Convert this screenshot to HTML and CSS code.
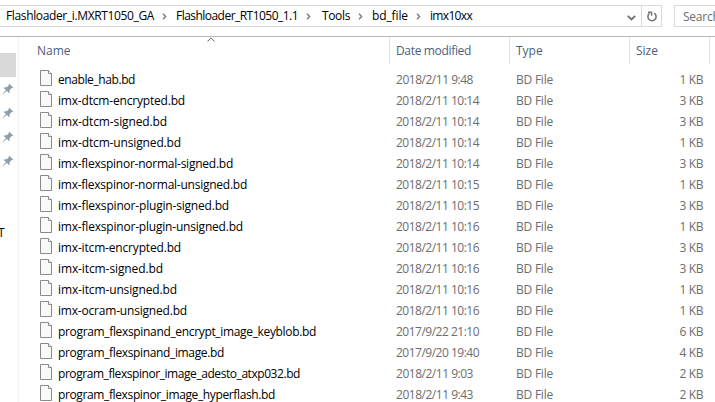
FILE: index.html
```
<!DOCTYPE html>
<html lang="en">
<head>
<meta charset="utf-8">
<title>imx10xx</title>
<link rel="stylesheet" href="styles.css">
</head>
<body>
<svg width="0" height="0" class="defs">
  <symbol id="file" viewBox="0 0 12 16"><path d="M.5.5h8l3 3v12H.5z" fill="#f8f9f9" stroke="#8b8b8b"/><path d="M8.5.5v3h3" fill="#fff" stroke="#8b8b8b"/></symbol>
  <symbol id="pin" viewBox="0 0 12 12"><path d="M7.2.8 11.2 4.6 10.3 5.3 9.6 5 7.6 7.2 7.7 9.3 6.8 10.1 4.6 7.8 1 11.2.7 10.8 3.8 7.1 1.8 5 2.7 4.2 4.8 4.3 6.9 2.3 6.5 1.5Z" fill="#929da5"/></symbol>
  <symbol id="sep" viewBox="0 0 5 7"><path d="M1 .8 3.6 3.5 1 6.2" fill="none" stroke="#808080" stroke-width="1.5"/></symbol>
</svg>
<div class="window">
  <header class="toolbar">
    <div class="address">
      <nav class="crumbs">
        <span class="c1">Flashloader_i.MXRT1050_GA</span><svg class="sep"><use href="#sep"/></svg>
        <span class="c2">Flashloader_RT1050_1.1</span><svg class="sep"><use href="#sep"/></svg>
        <span class="c3">Tools</span><svg class="sep"><use href="#sep"/></svg>
        <span class="c4">bd_file</span><svg class="sep"><use href="#sep"/></svg>
        <span class="c5">imx10xx</span>
      </nav>
      <svg class="drop" viewBox="0 0 9 6"><path d="M.8.9 4.5 4.5 8.2.9" fill="none" stroke="#707070" stroke-width="1.9"/></svg>
      <div class="refresh"><svg viewBox="0 0 12 12"><path d="M8.2 2.2A4.1 4.1 0 1 1 3.5 2.4" fill="none" stroke="#757575" stroke-width="1.6"/><path d="M2 1.2H5.6V4.8" fill="none" stroke="#757575" stroke-width="1.4"/></svg></div>
    </div>
    <div class="search">Search</div>
  </header>
  <main class="content">
    <aside class="nav">
      <div class="selected"></div>
      <svg class="pin"><use href="#pin"/></svg>
      <svg class="pin"><use href="#pin"/></svg>
      <svg class="pin"><use href="#pin"/></svg>
      <svg class="pin"><use href="#pin"/></svg>
      <div class="label">T</div>
    </aside>
    <section class="list">
      <div class="head">
        <div class="name">Name<svg class="sort" viewBox="0 0 8 5"><path d="M.5 4.4 4 .9 7.5 4.4" fill="none" stroke="#666"/></svg></div>
        <div><span class="modified">Date modified</span></div><div>Type</div><div>Size</div>
      </div>
      <div class="rows" id="rows"></div>
    </section>
  </main>
</div>
<script src="files.js"></script>
</body>
</html>
```
FILE: files.js
```
const files = [
  ["enable_hab.bd", "2018/2/11 9:48", 1, 77],
  ["imx-dtcm-encrypted.bd", "2018/2/11 10:14", 3, 127],
  ["imx-dtcm-signed.bd", "2018/2/11 10:14", 3, 109],
  ["imx-dtcm-unsigned.bd", "2018/2/11 10:14", 1, 123],
  ["imx-flexspinor-normal-signed.bd", "2018/2/11 10:14", 3, 175],
  ["imx-flexspinor-normal-unsigned.bd", "2018/2/11 10:15", 1, 189],
  ["imx-flexspinor-plugin-signed.bd", "2018/2/11 10:15", 3, 171],
  ["imx-flexspinor-plugin-unsigned.bd", "2018/2/11 10:16", 1, 185],
  ["imx-itcm-encrypted.bd", "2018/2/11 10:16", 3, 123],
  ["imx-itcm-signed.bd", "2018/2/11 10:16", 3, 105],
  ["imx-itcm-unsigned.bd", "2018/2/11 10:16", 1, 119],
  ["imx-ocram-unsigned.bd", "2018/2/11 10:16", 1, 129],
  ["program_flexspinand_encrypt_image_keyblob.bd", "2017/9/22 21:10", 6, 258],
  ["program_flexspinand_image.bd", "2017/9/20 19:40", 4, 166],
  ["program_flexspinor_image_adesto_atxp032.bd", "2018/2/11 9:03", 2, 242],
  ["program_flexspinor_image_hyperflash.bd", "2018/2/11 9:43", 2, 217]
];

// Spread the glyphs so that each label fills its measured width.
function fit(el, width) {
  const natural = el.getBoundingClientRect().width;
  el.style.letterSpacing = (width - natural) / el.textContent.length + "px";
}

const rows = document.getElementById("rows");
for (const [name, date, size, width] of files) {
  const row = document.createElement("div");
  row.className = "row";
  row.innerHTML = `<div class="name"><svg class="file"><use href="#file"/></svg><span>${name}</span></div>
    <div><span class="date">${date}</span></div><div><span class="type">BD File</span></div><div class="size"><span>${size} KB</span></div>`;
  rows.append(row);
  fit(row.querySelector(".name span"), width);
  fit(row.querySelector(".date"), date.length === 15 ? 83 : 77);
  fit(row.querySelector(".type"), 37);
  fit(row.querySelector(".size span"), 23.5);
}
[["c1", 148], ["c2", 122], ["c3", 28], ["c4", 36], ["c5", 42], ["modified", 75]].forEach(([c, w]) =>
  fit(document.querySelector("." + c), w));
```
FILE: styles.css
```
* { box-sizing: border-box; }
body { margin: 0; background: #fff; overflow: hidden; font: 12px/21px "Open Sans", "Noto Sans", sans-serif; color: #000; }
svg { display: block; flex: none; }
.defs { position: absolute; }
.window { width: 715px; height: 402px; overflow: hidden; display: flex; flex-direction: column; }
.toolbar { height: 37px; flex: none; padding-top: 5px; display: flex; gap: 12px; border-bottom: 1px solid #b5b5b5; }
.address { width: 662px; flex: none; height: 22px; border: 1px solid #d9d9d9; border-left: 0; display: flex; align-items: center; }
.crumbs { flex: 1; display: flex; align-items: center; padding-left: 6px; line-height: 22px; white-space: nowrap; }
.crumbs span { flex: none; }
.sep { width: 5px; height: 7px; margin: 1px 9px 0 8px; }
.crumbs .c2 + .sep { margin-right: 11px; }
.drop { width: 9px; height: 6px; margin: 3px 5px 0 0; }
.refresh { width: 20px; height: 20px; border-left: 1px solid #d9d9d9; padding: 5px 0 0 4px; }
.refresh svg { width: 12px; height: 12px; }
.search { width: 60px; flex: none; height: 22px; border: 1px solid #d9d9d9; padding-left: 8px; line-height: 22px; color: #6d6d6d; letter-spacing: -.25px; }
.content { flex: 1; min-height: 0; display: flex; }
.nav { width: 19px; flex: none; border-right: 1px solid #f2f2f2; padding-top: 16px; overflow: hidden; }
.selected { width: 16px; height: 24px; background: #d9d9d9; margin-bottom: 6px; }
.pin { width: 12px; height: 12px; margin: 0 0 12px 2px; }
.label { margin: 55px 0 0 -2px; }
.list { flex: 1; }
.head, .row { display: grid; grid-template-columns: 371px 120px 120px 80px 1fr; }
.head { height: 25px; line-height: 27px; color: #4c607a; }
.head > div { border-right: 1px solid #e2e2e2; padding-left: 6px; }
.head .name { padding-left: 18px; position: relative; }
.sort { position: absolute; left: 188px; top: 0; width: 8px; height: 5px; }
.rows { padding-top: 6px; }
.row { height: 21px; line-height: 23px; color: #6d6d6d; white-space: nowrap; }
.row > div { padding-left: 6px; }
.row .name { display: flex; padding-left: 21px; gap: 6px; color: #000; }
.file { width: 12px; height: 16px; margin-top: 2px; }
.row .size { text-align: right; padding-right: 7px; }
```
